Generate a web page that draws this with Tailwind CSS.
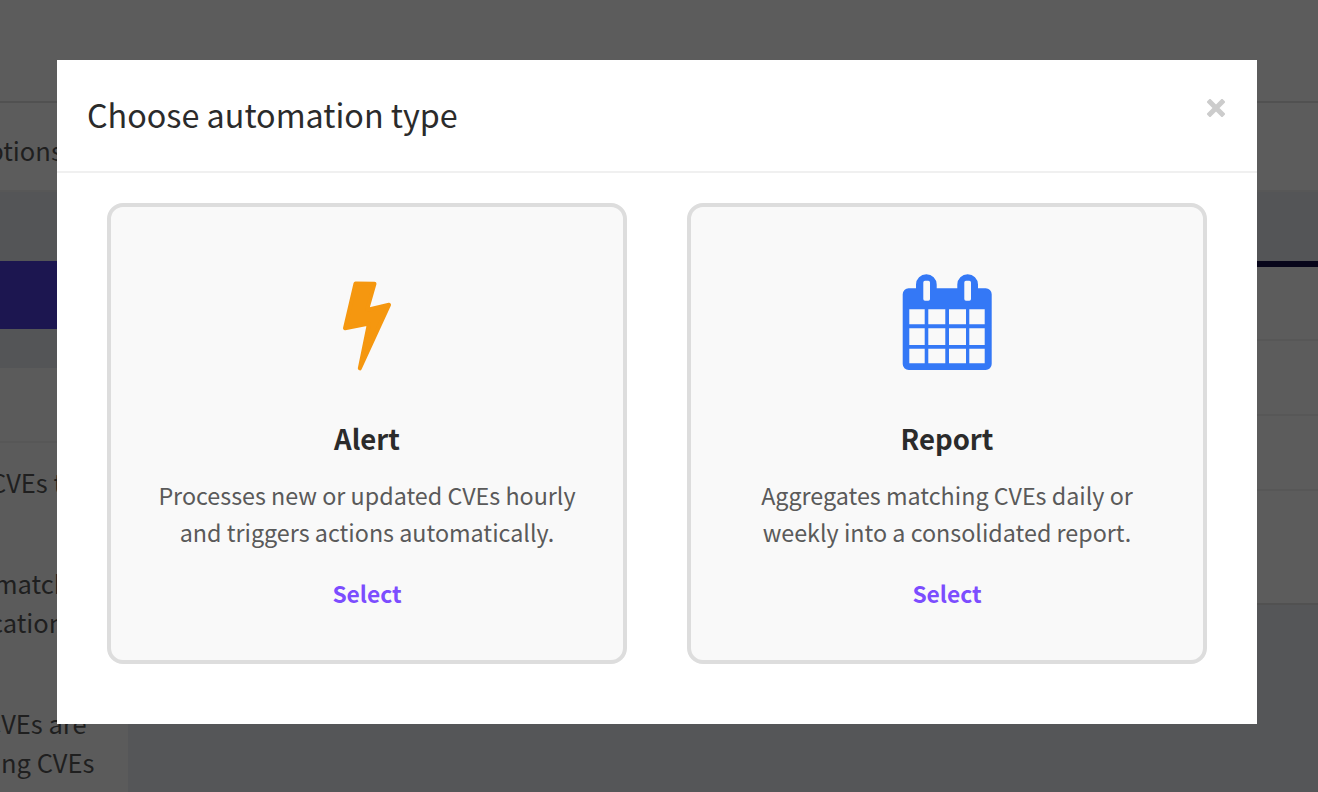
<!DOCTYPE html>
<html lang="en">
<head>
    <meta charset="UTF-8" />
    <meta name="viewport" content="width=device-width, initial-scale=1" />
    <title>Choose automation type</title>
    <script src="https://cdn.jsdelivr.net/npm/@tailwindcss/browser@4"></script>
</head>
<body class="relative h-[792px] overflow-hidden bg-[#555658] font-['Noto_Sans_CJK_SC','Noto_Sans',sans-serif]">

<!-- dimmed page behind the modal -->
<div class="flex h-full flex-col text-[25.5px] leading-[40px] text-[#1f1f1f]">
    <div class="h-[103px] shrink-0 border-b-2 border-[#515151] bg-[#5c5c5c]"></div>
    <div class="flex h-[89px] shrink-0 items-center border-b-2 border-[#575757] bg-[#5c5c5c] pt-[6px]">
        <span class="ml-[-31px] whitespace-nowrap">Options</span>
    </div>
    <div class="h-[69px] shrink-0 bg-[#545557]"></div>
    <div class="relative h-[68px] shrink-0 bg-[#545557]">
        <div class="h-[68px] w-[57px] bg-[#1c1650]"></div>
        <div class="absolute top-0 right-0 h-[6px] w-[61px] bg-[#07051a]"></div>
    </div>
    <div class="h-[39px] shrink-0 bg-[#545557]"></div>
    <div class="flex min-h-0 flex-1">
        <div class="w-[128px] shrink-0 bg-[#5b5b5b]">
            <div class="h-[75px] border-b-2 border-[#575757]"></div>
            <div class="ml-[-10px] whitespace-nowrap pt-[19px]">CVEs to</div>
            <div class="ml-[-6px] whitespace-nowrap pt-[61px] leading-[39px]">match</div>
            <div class="ml-[-10px] whitespace-nowrap">cations</div>
            <div class="ml-[-15px] whitespace-nowrap pt-[61px] leading-[39px]">CVEs are</div>
            <div class="ml-[-6px] whitespace-nowrap">ing CVEs</div>
        </div>
        <div class="flex-1"></div>
    </div>
</div>
<div class="absolute top-[267px] right-0 flex w-[61px] flex-col bg-[#5c5c5c]">
    <div class="h-[74px] border-b-2 border-[#575757]"></div>
    <div class="h-[75px] border-b-2 border-[#575757]"></div>
    <div class="h-[75px] border-b-2 border-[#575757]"></div>
    <div class="h-[114px] border-b-2 border-[#515151]"></div>
</div>

<!-- modal -->
<div class="absolute top-[60px] left-[57px] h-[664px] w-[1200px] bg-white text-[#2b2b2b]">
    <div class="flex h-[113px] items-start justify-between border-b-2 border-[#f0f0f0] pr-[32px] pl-[30px]">
        <h2 class="pt-[30px] text-[32.3px] leading-[48px] font-normal">Choose automation type</h2>
        <svg class="mt-[39px]" width="18" height="18" viewBox="0 0 18 18" aria-hidden="true">
            <path d="M3 3 L15 15 M15 3 L3 15" stroke="#cccccc" stroke-width="5" stroke-linecap="square" fill="none" />
        </svg>
    </div>
    <div class="flex gap-[60px] pt-[30px] pl-[50px]">
        <div class="flex h-[461px] w-[520px] flex-col items-center rounded-[16px] border-4 border-[#dddddd] bg-[#f9f9f9] text-center">
            <svg class="mt-[65px]" width="94" height="100" viewBox="320 272 94 100" aria-hidden="true">
                <path d="M355.5 283.5 L374.5 283.8 L367 310 L389 304.8 L359.8 368.3 L369 323.5 L345 328.2 Z" fill="#f5970f" stroke="#f5970f" stroke-width="4" stroke-linejoin="round" />
            </svg>
            <h3 class="mt-[46px] text-[27.5px] leading-[40px] font-semibold">Alert</h3>
            <p class="mt-[19px] text-[23.3px] leading-[37px] text-[#5a5a5a]">Processes new or updated CVEs hourly<br />and triggers actions automatically.</p>
            <a class="mt-[25px] text-[22.8px] leading-[36px] font-semibold text-[#7c4dff]">Select</a>
        </div>
        <div class="flex h-[461px] w-[520px] flex-col items-center rounded-[16px] border-4 border-[#dddddd] bg-[#f9f9f9] text-center">
            <svg class="mt-[65px]" width="94" height="100" viewBox="900 272 94 100" aria-hidden="true">
                <path fill="#3478f6" fill-rule="evenodd" d="M908.7 288.3 H916 V284.5 A10.3 10.3 0 0 1 936.7 284.5 V288.3 H957.3 V284.5 A10.3 10.3 0 0 1 978 284.5 V288.3 H985.7 A6 6 0 0 1 991.7 294.3 V364 A6 6 0 0 1 985.7 370 H908.7 A6 6 0 0 1 902.7 364 V294.3 A6 6 0 0 1 908.7 288.3 Z
                M925 280.7 H928.3 A1.7 1.7 0 0 1 930 282.4 V299 A1.7 1.7 0 0 1 928.3 300.7 H925 A1.7 1.7 0 0 1 923.3 299 V282.4 A1.7 1.7 0 0 1 925 280.7 Z
                M966 280.7 H969.3 A1.7 1.7 0 0 1 971 282.4 V299 A1.7 1.7 0 0 1 969.3 300.7 H966 A1.7 1.7 0 0 1 964.3 299 V282.4 A1.7 1.7 0 0 1 966 280.7 Z
                M909.3 309.3 H924.7 V324.3 H909.3 Z M928.3 309.3 H945.3 V324.3 H928.3 Z M949 309.3 H966 V324.3 H949 Z M969.3 309.3 H984.7 V324.3 H969.3 Z
                M909.3 328.3 H924.7 V345 H909.3 Z M928.3 328.3 H945.3 V345 H928.3 Z M949 328.3 H966 V345 H949 Z M969.3 328.3 H984.7 V345 H969.3 Z
                M909.3 348.7 H924.7 V363.3 H909.3 Z M928.3 348.7 H945.3 V363.3 H928.3 Z M949 348.7 H966 V363.3 H949 Z M969.3 348.7 H984.7 V363.3 H969.3 Z" />
            </svg>
            <h3 class="mt-[46px] text-[27.5px] leading-[40px] font-semibold">Report</h3>
            <p class="mt-[19px] text-[23.3px] leading-[37px] text-[#5a5a5a]">Aggregates matching CVEs daily or<br />weekly into a consolidated report.</p>
            <a class="mt-[25px] text-[22.8px] leading-[36px] font-semibold text-[#7c4dff]">Select</a>
        </div>
    </div>
</div>

</body>
</html>
